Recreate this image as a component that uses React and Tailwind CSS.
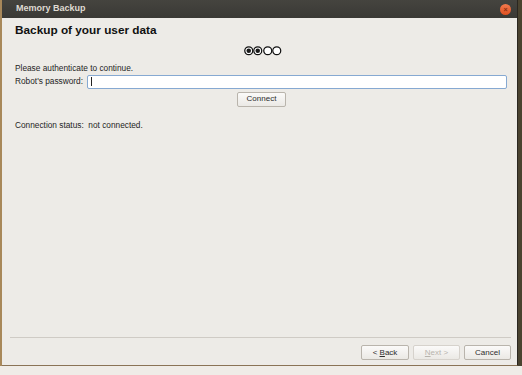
import React from "react";

function Dot({ on }) {
  return (
    <svg width="9.5" height="9.5" viewBox="0 0 10 10" className="block">
      <circle cx="5" cy="5" r="4.2" fill="#ffffff" stroke="#111" strokeWidth="1.3" />
      {on && <circle cx="5" cy="5" r="2.4" fill="#1a1a1a" />}
    </svg>
  );
}

function Btn({ children, disabled, className = "" }) {
  return (
    <div
      className={`flex items-center justify-center h-[15px] rounded-[2px] border bg-gradient-to-b from-[#fbfaf9] to-[#ebe9e5] text-[8px] ${disabled ? "text-[#b8b4ad] border-[#d6d2cc]" : "text-[#2d2d2d] border-[#b9b4ac]"} ${className}`}
    >
      {children}
    </div>
  );
}

export default function App() {
  return (
    <div
      className="w-[522px] h-[375px] bg-[#efece7] flex"
      style={{ fontFamily: '"Liberation Sans", Arial, sans-serif' }}
    >
      <div className="w-[2px] h-[366px] bg-[#a8885a]" />
      <div className="w-[516px] h-[366px] flex flex-col border-r border-r-[#2a2620] border-b border-b-[#8a7356]">
        <div className="h-[18px] bg-gradient-to-b from-[#45443f] to-[#3a3935] flex items-center pl-[14px] pr-[6px] shrink-0">
          <span className="text-[9px] font-bold text-[#dfdbd2]">Memory Backup</span>
          <div className="ml-auto w-[11px] h-[11px] rounded-full bg-gradient-to-b from-[#f47a4d] to-[#de4f1e] flex items-center justify-center">
            <span className="text-[7px] leading-none text-[#8a2c0f] font-bold">×</span>
          </div>
        </div>
        <div className="flex-1 bg-[#edebe7] flex flex-col px-[13px]">
          <div className="mt-[5px] text-[11.8px] font-bold text-[#111] leading-[15px]">
            Backup of your user data
          </div>
          <div className="mt-[8px] flex justify-center pl-[6px]">
            <Dot on />
            <Dot on />
            <Dot />
            <Dot />
          </div>
          <div className="mt-[7px] text-[8.3px] text-[#1e1e1e] leading-[10px]">Please authenticate to continue.</div>
          <div className="mt-[2px] flex items-center">
            <span className="text-[8.3px] text-[#1e1e1e] w-[72px]">Robot's password:</span>
            <div className="flex-1 mr-[-3px] h-[14px] bg-white border border-[#86a9d2] rounded-[2px] flex items-center pl-[3px]">
              <div className="w-px h-[9px] bg-[#222]" />
            </div>
          </div>
          <div className="mt-[3px] flex justify-center">
            <Btn className="w-[49px] ml-[4px]">Connect</Btn>
          </div>
          <div className="mt-[13px] text-[8.3px] text-[#1e1e1e] leading-[10px]">
            Connection status:&nbsp; not connected.
          </div>
          <div className="flex-1" />
          <div className="h-px bg-[#cfcbc5] ml-[-5px] mr-[-7px]" />
          <div className="mt-[7px] mb-[5px] flex justify-end gap-[4px] mr-[-7px]">
            <Btn className="w-[48px]">&lt;&nbsp;<span className="underline">B</span>ack</Btn>
            <Btn disabled className="w-[47px]"><span className="underline">N</span>ext&nbsp;&gt;</Btn>
            <Btn className="w-[47px]">Cancel</Btn>
          </div>
        </div>
      </div>
      <div className="flex-1 h-[366px] bg-[#4a4330]" />
    </div>
  );
}
